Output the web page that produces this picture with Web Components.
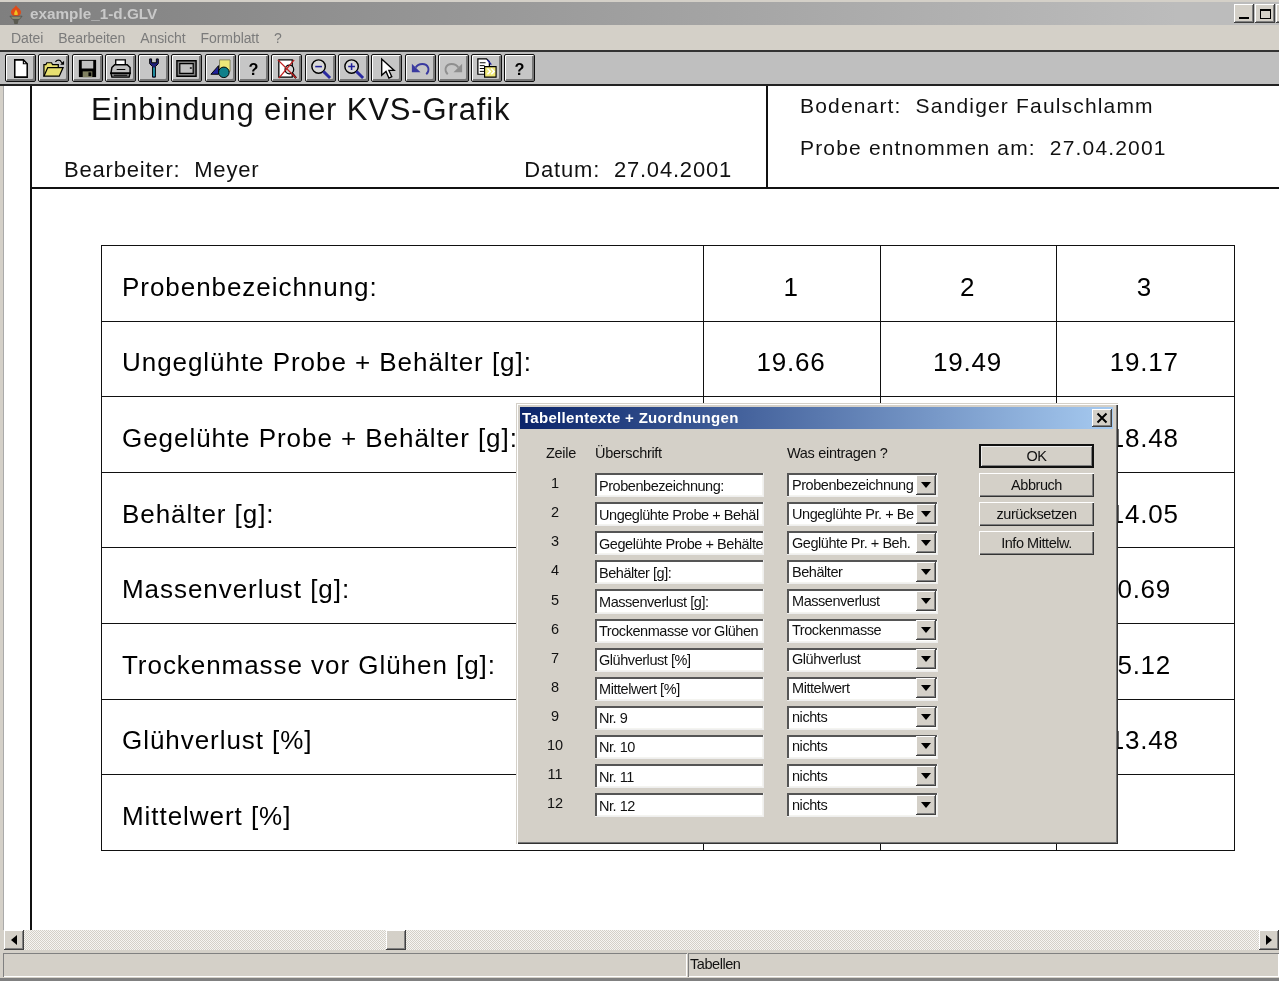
<!DOCTYPE html>
<html lang="de"><head><meta charset="utf-8"><title>example_1-d.GLV</title>
<style>
html,body{margin:0;padding:0;height:981px;overflow:hidden;background:#d4d0c8}
body{font-family:"Liberation Sans",Arial,sans-serif}
</style></head><body>
<x-app>
  <x-titlebar slot="top" caption="example_1-d.GLV"></x-titlebar>
  <x-menubar slot="top"><span>Datei</span><span>Bearbeiten</span><span>Ansicht</span><span>Formblatt</span><span>?</span></x-menubar>
  <x-toolbar slot="top">
    <x-tool><svg viewBox="0 0 24 24"><path d="M6 3h9l4 4v14H6z" fill="#fff" stroke="#000" stroke-width="1.6"/><path d="M15 3v4h4" fill="none" stroke="#000" stroke-width="1.2"/></svg></x-tool>
    <x-tool><svg viewBox="0 0 24 24"><path d="M2 20V8h2l1-2h5l1 2h6v3" fill="#e8e070" stroke="#000" stroke-width="1.3"/><path d="M2 20l4-9h16l-4 9z" fill="#e8e070" stroke="#000" stroke-width="1.3"/><path d="M14 5c2-2.500 5-2 6 0l1.500 2" fill="none" stroke="#000" stroke-width="1.300"/><path d="M23 4v4h-4z" fill="#000"/></svg></x-tool>
    <x-tool><svg viewBox="0 0 24 24"><path d="M3 3h18v18H3z" fill="#000"/><path d="M6 4h12v8H6z" fill="#c0c0c0"/><path d="M7 15h10v6H7z" fill="#808060"/><path d="M13 16h3v4h-3z" fill="#000"/></svg></x-tool>
    <x-tool><svg viewBox="0 0 24 24"><path d="M7 3h10v7H7z" fill="#fff" stroke="#000" stroke-width="1.400"/><path d="M3 11l3-3h13l3 3v6H2z" fill="#c0c0c0" stroke="#000" stroke-width="1.500"/><path d="M2 17h20l-1 4H3z" fill="#808080" stroke="#000" stroke-width="1.400"/><path d="M8 13h9M5 19h14" stroke="#000" stroke-width="1.200"/></svg></x-tool>
    <x-tool><svg viewBox="0 0 24 24"><path d="M8 2v5l3 3v11h3V10l3-3V2h-2v4h-5V2z" fill="#20207a" stroke="#000" stroke-width="1"/><path d="M11.500 11h2v9h-2z" fill="#1f8f9f"/></svg></x-tool>
    <x-tool><svg viewBox="0 0 24 24"><path d="M2 4h20v16H2z" fill="#808080" stroke="#000" stroke-width="1.500"/><path d="M5 7h14v10H5z" fill="#c0c0c0" stroke="#000" stroke-width="1.300"/><path d="M15.500 11.500h2" stroke="#000" stroke-width="1.500"/></svg></x-tool>
    <x-tool><svg viewBox="0 0 24 24"><path d="M11 3h11v12H11z" fill="#f0e878" stroke="#808060"/><path d="M2 18l8-9v9z" fill="#20209a" stroke="#000"/><circle cx="15.500" cy="16" r="5.500" fill="#10808a" stroke="#000"/></svg></x-tool>
    <x-tool><svg viewBox="0 0 24 24"><text x="12" y="18.500" text-anchor="middle" font-family="Liberation Sans" font-weight="700" font-size="17">?</text></svg></x-tool>
    <x-tool><svg viewBox="0 0 24 24"><path d="M4 3h14v18H4z" fill="#fff" stroke="#000" stroke-width="1.300"/><circle cx="15" cy="13" r="4.500" fill="#d8d8d8" stroke="#000" stroke-width="1.300"/><path d="M18 17l4 5" stroke="#000" stroke-width="2.200"/><path d="M3 3l19 19M20 3L4 22" stroke="#c02020" stroke-width="1.400"/></svg></x-tool>
    <x-tool><svg viewBox="0 0 24 24"><circle cx="10" cy="10" r="7" fill="#d8d8d8" stroke="#000" stroke-width="1.500"/><path d="M6.500 10h7" stroke="#20209a" stroke-width="1.600"/><path d="M15 15l7 7" stroke="#2a2aa0" stroke-width="3"/></svg></x-tool>
    <x-tool><svg viewBox="0 0 24 24"><circle cx="10" cy="10" r="7" fill="#d8d8d8" stroke="#000" stroke-width="1.500"/><path d="M6.500 10h7M10 6.500v7" stroke="#20209a" stroke-width="1.600"/><path d="M15 15l7 7" stroke="#2a2aa0" stroke-width="3"/></svg></x-tool>
    <x-tool><svg viewBox="0 0 24 24"><path d="M7 2v17l4.500-4 3 7 3-1.500-3-6.500H20z" fill="#fff" stroke="#000" stroke-width="1.400"/></svg></x-tool>
    <x-tool><svg viewBox="0 0 24 24"><path d="M7 11c3-5 11-5 13 0 1 3 0 5-2 7" fill="none" stroke="#3a3aa0" stroke-width="2"/><path d="M3 7v9h9z" fill="#3a3aa0"/></svg></x-tool>
    <x-tool><svg viewBox="0 0 24 24"><path d="M17 11c-3-5-11-5-13 0-1 3 0 5 2 7" fill="none" stroke="#8f8f8f" stroke-width="2"/><path d="M21 7v9h-9z" fill="#8f8f8f"/></svg></x-tool>
    <x-tool><svg viewBox="0 0 24 24"><path d="M3 2h9l3 3v13H3z" fill="#fff" stroke="#000" stroke-width="1.300"/><path d="M5 6h6M5 9h5M5 12h5M5 15h5" stroke="#000" stroke-width="1"/><path d="M10 10h12v11H10z" fill="#f0e878" stroke="#000" stroke-width="1.200"/><path d="M13 12l3 3-3 3M17 12l3 3-3 3" fill="none" stroke="#fff" stroke-width="1.500"/><path d="M13 3l4 5" stroke="#20209a" stroke-width="1.500"/></svg></x-tool>
    <x-tool><svg viewBox="0 0 24 24"><text x="12" y="18.500" text-anchor="middle" font-family="Liberation Sans" font-weight="700" font-size="17">?</text></svg></x-tool>
  </x-toolbar>

  <x-sheet>
    <x-sheet-head slot="head">
      <span slot="title">Einbindung einer KVS-Grafik</span>
      <span slot="editor">Bearbeiter:&nbsp; Meyer</span>
      <span slot="date">Datum:&nbsp; 27.04.2001</span>
      <span slot="soil">Bodenart:&nbsp; Sandiger Faulschlamm</span>
      <span slot="sample">Probe entnommen am:&nbsp; 27.04.2001</span>
    </x-sheet-head>
    <x-data-table>
      <x-cell label>Probenbezeichnung:</x-cell><x-cell>1</x-cell><x-cell>2</x-cell><x-cell>3</x-cell>
      <x-cell label>Ungeglühte Probe + Behälter [g]:</x-cell><x-cell>19.66</x-cell><x-cell>19.49</x-cell><x-cell>19.17</x-cell>
      <x-cell label>Gegelühte Probe + Behälter [g]:</x-cell><x-cell></x-cell><x-cell></x-cell><x-cell>18.48</x-cell>
      <x-cell label>Behälter [g]:</x-cell><x-cell></x-cell><x-cell></x-cell><x-cell>14.05</x-cell>
      <x-cell label>Massenverlust [g]:</x-cell><x-cell></x-cell><x-cell></x-cell><x-cell>0.69</x-cell>
      <x-cell label>Trockenmasse vor Glühen [g]:</x-cell><x-cell></x-cell><x-cell></x-cell><x-cell>5.12</x-cell>
      <x-cell label>Glühverlust [%]</x-cell><x-cell></x-cell><x-cell></x-cell><x-cell>13.48</x-cell>
      <x-cell label>Mittelwert [%]</x-cell><x-cell></x-cell><x-cell></x-cell><x-cell></x-cell>
    </x-data-table>
  </x-sheet>

  <x-dialog slot="overlay" caption="Tabellentexte + Zuordnungen">
    <x-form-grid>
      <x-lbl head>Zeile</x-lbl><x-lbl head>Überschrift</x-lbl><x-lbl head>Was eintragen ?</x-lbl>
      <x-lbl num>1</x-lbl><x-field>Probenbezeichnung:</x-field><x-combo>Probenbezeichnung</x-combo>
      <x-lbl num>2</x-lbl><x-field>Ungeglühte Probe + Behäl</x-field><x-combo>Ungeglühte Pr. + Be</x-combo>
      <x-lbl num>3</x-lbl><x-field>Gegelühte Probe + Behälte</x-field><x-combo>Geglühte Pr. + Beh.</x-combo>
      <x-lbl num>4</x-lbl><x-field>Behälter [g]:</x-field><x-combo>Behälter</x-combo>
      <x-lbl num>5</x-lbl><x-field>Massenverlust [g]:</x-field><x-combo>Massenverlust</x-combo>
      <x-lbl num>6</x-lbl><x-field>Trockenmasse vor Glühen</x-field><x-combo>Trockenmasse</x-combo>
      <x-lbl num>7</x-lbl><x-field>Glühverlust [%]</x-field><x-combo>Glühverlust</x-combo>
      <x-lbl num>8</x-lbl><x-field>Mittelwert [%]</x-field><x-combo>Mittelwert</x-combo>
      <x-lbl num>9</x-lbl><x-field>Nr. 9</x-field><x-combo>nichts</x-combo>
      <x-lbl num>10</x-lbl><x-field>Nr. 10</x-field><x-combo>nichts</x-combo>
      <x-lbl num>11</x-lbl><x-field>Nr. 11</x-field><x-combo>nichts</x-combo>
      <x-lbl num>12</x-lbl><x-field>Nr. 12</x-field><x-combo>nichts</x-combo>
    </x-form-grid>
    <x-btn-col slot="side">
      <x-btn default>OK</x-btn><x-btn>Abbruch</x-btn><x-btn>zurücksetzen</x-btn><x-btn>Info Mittelw.</x-btn>
    </x-btn-col>
  </x-dialog>

  <x-hscroll slot="bottom"></x-hscroll>
  <x-status slot="bottom">Tabellen</x-status>
</x-app>

<script>
const FACE='#d4d0c8';
function def(name,css,html,init){
  customElements.define(name,class extends HTMLElement{
    constructor(){super();const r=this.attachShadow({mode:'open'});
      r.innerHTML='<style>'+css+'</style>'+html;}
    connectedCallback(){init&&init.call(this,this.shadowRoot);}
  });
}
const arrowBtn=`display:flex;align-items:center;justify-content:center;background:${FACE};box-shadow:inset -1px -1px 0 #404040,inset 1px 1px 0 #fff,inset -2px -2px 0 #808080;box-sizing:border-box;`;

def('x-app',`:host{display:flex;flex-direction:column;position:relative;width:1279px;height:981px;overflow:hidden;background:${FACE};filter:blur(.35px)}
  main{flex:1;min-height:0;display:flex}`,
  `<slot name="top"></slot><main><slot></slot></main><slot name="bottom"></slot><slot name="overlay"></slot>`);

def('x-titlebar',`:host{display:flex;align-items:center;height:23px;margin-top:2px;background:linear-gradient(90deg,#7f7f7f,#bcbcbc 92%);color:#c9c9c9;font:700 15.300px "Liberation Sans",sans-serif;padding:0 0 0 7px;box-sizing:border-box;overflow:hidden;flex:none}
  svg{width:18px;height:22px;flex:none;margin-right:5px}
  .c{flex:1;white-space:nowrap}
  .b{flex:none;width:20px;height:19px;${arrowBtn}margin-left:0}
  .b+.b{margin-left:1px}.x{margin:0 -17px 0 3px}
  .m i{display:block;width:10px;height:2px;background:#000;margin-top:9px}
  .r i{display:block;width:11px;height:10px;border:1.500px solid #000;border-top-width:2px;box-sizing:border-box}`,
  `<svg viewBox="0 0 16 20"><path d="M8 2c2 3 5 4 4.500 7-.5 2-2 3-4.500 3s-4-1-4.500-3C3 6 6 5 8 2z" fill="#e04a18"/><path d="M8 6c1 2 2 3 1.500 5H6.500C6 9 7 8 8 6z" fill="#f0c020"/><path d="M2.500 12h11l-2.500 3H5z" fill="#8a8a70" stroke="#444" stroke-width=".6"/><path d="M5.500 15h5l-1 4h-3z" fill="#5a5a50"/></svg>
   <span class="c"></span><span class="b m"><i></i></span><span class="b r"><i></i></span><span class="b x"></span>`,
  function(r){r.querySelector('.c').textContent=this.getAttribute('caption');});

def('x-menubar',`:host{display:flex;align-items:center;gap:15px;height:25px;padding:0 0 0 11px;color:#7b7b7b;font:14px "Liberation Sans",sans-serif;flex:none;box-sizing:border-box;letter-spacing:-.08px}`,`<slot></slot>`);

def('x-toolbar',`:host{display:flex;align-items:center;gap:2.300px;height:36px;padding:0 0 0 5px;background:#bfbfbf;border-top:2px solid #333;border-bottom:2px solid #222;box-sizing:border-box;flex:none}`,`<slot></slot>`);

def('x-tool',`:host{display:flex;align-items:center;justify-content:center;width:31px;height:28px;box-sizing:border-box;background:#c6c6c6;border:1.500px solid #111;border-radius:2px;box-shadow:inset 1px 1px 0 #fff,inset -2px -2px 0 #777}
  ::slotted(svg){width:23px;height:23px}`,`<slot></slot>`);

def('x-sheet',`:host{display:flex;flex-direction:column;flex:1;min-width:0;background:#fff;margin-left:0;border-left:3px solid ${FACE};box-shadow:inset 1px 0 0 #aaa}
  .p{flex:1;margin-left:27px;border-left:2px solid #111}`,
  `<div class="p"><slot name="head"></slot><slot></slot></div>`);

def('x-sheet-head',`:host{display:flex;height:103px;border-bottom:2px solid #111;box-sizing:border-box;color:#111;font:22px "Liberation Sans",sans-serif;letter-spacing:.8px;white-space:nowrap}
  .l{width:736px;box-sizing:border-box;border-right:2px solid #111;padding:0 34px 0 32px;display:flex;flex-direction:column}
  .t{padding:6px 0 0 27px;font-size:31px;line-height:36px;letter-spacing:.85px;height:65px}
  .s{display:flex;justify-content:space-between;line-height:26px}
  .rr{padding:7px 0 0 32px;display:flex;flex-direction:column;gap:16px;line-height:26px;font-size:21px;letter-spacing:1.170px}`,
  `<div class="l"><div class="t"><slot name="title"></slot></div><div class="s"><slot name="editor"></slot><slot name="date"></slot></div></div>
   <div class="rr"><slot name="soil"></slot><slot name="sample"></slot></div>`);

def('x-data-table',`:host{display:grid;grid-template-columns:602px 177px 176px 177.500px;grid-auto-rows:75.600px;margin:56px 0 0 69px;width:1132.500px;border-top:1.500px solid #111;border-left:1.500px solid #111;box-sizing:content-box}`,`<slot></slot>`);

def('x-cell',`:host{display:flex;align-items:center;justify-content:center;border-right:1.500px solid #111;border-bottom:1.500px solid #111;box-sizing:border-box;color:#000;font:26px "Liberation Sans",sans-serif;letter-spacing:.75px;white-space:nowrap;overflow:hidden;padding:8px 2px 0 0}
  :host([label]){justify-content:flex-start;padding:8px 0 0 20px;letter-spacing:.95px}`,`<slot></slot>`);

def('x-dialog',`:host{position:absolute;left:516px;top:403px;width:602px;height:441px;box-sizing:border-box;background:${FACE};padding:4px 5px 0 4px;box-shadow:inset 1px 1px 0 ${FACE},inset 2px 2px 0 #fff,inset -1px -1px 0 #333,inset -2px -2px 0 #777;display:block}
  header{height:22px;box-sizing:border-box;display:flex;align-items:center;background:linear-gradient(90deg,#0a246a,#a6caf0);color:#fff;font:700 15px "Liberation Sans",sans-serif;letter-spacing:.3px;padding:0 0 1px 2px}
  header span{flex:1}
  header b{width:20px;height:18px;margin-right:1px;${arrowBtn}}
  header svg{width:12px;height:12px}
  .b{display:flex;padding:15px 0 0 26px;gap:41px}`,
  `<header><span></span><b><svg viewBox="0 0 12 12"><path d="M1.500 1.500l9 9M10.500 1.500l-9 9" stroke="#000" stroke-width="2"/></svg></b></header>
   <div class="b"><slot></slot><slot name="side"></slot></div>`,
  function(r){r.querySelector('header span').textContent=this.getAttribute('caption');});

def('x-form-grid',`:host{display:grid;grid-template-columns:49px 192px 151px;grid-auto-rows:24.100px;row-gap:5px}`,`<slot></slot>`);
const T14=`font:14.500px "Liberation Sans",sans-serif;letter-spacing:-.45px;color:#111;white-space:nowrap;`;
def('x-lbl',`:host{display:flex;align-items:center;${T14}box-sizing:border-box}
  :host([head]){padding-bottom:6px;letter-spacing:-.3px}
  :host([num]){padding:0 0 4px 0;width:18px;justify-content:center;letter-spacing:0}`,`<slot></slot>`);

const sunken=`box-sizing:border-box;background:#fff;box-shadow:inset 2px 2px 0 #555,inset -1px -1px 0 #f4f4f0,0 0 0 1px ${FACE};border-right:1px solid #eee;border-bottom:1px solid #eee;`;
def('x-field',`:host{display:flex;align-items:center;width:169px;${sunken}${T14}padding:2px 0 0 4px;overflow:hidden}`,`<slot></slot>`);
def('x-combo',`:host{display:flex;align-items:center;width:151px;${sunken}${T14}padding:0 1px 0 5px;overflow:hidden}
  span{display:block;flex:1;overflow:hidden;min-width:0}
  b{width:20px;height:20px;flex:none;${arrowBtn}margin-left:1px}
  b i{border:5px solid transparent;border-top:6px solid #000;border-bottom:0}`,`<span><slot></slot></span><b><i></i></b>`);

def('x-btn-col',`:host{display:flex;flex-direction:column;gap:5px;width:115px}`,`<slot></slot>`);
def('x-btn',`:host{display:flex;align-items:center;justify-content:center;height:24.100px;${T14}background:${FACE};box-shadow:inset 1px 1px 0 #fff,inset -1px -1px 0 #333,inset -2px -2px 0 #808080;box-sizing:border-box}
  :host([default]){outline:2px solid #111;outline-offset:-2px;box-shadow:inset 3px 3px 0 #eee,inset -3px -3px 0 #808080}`,`<slot></slot>`);

def('x-hscroll',`:host{display:flex;height:20px;flex:none;background:#fff;margin-left:4px;background-image:conic-gradient(#f6f5f2 25%,${FACE} 0 50%,#f6f5f2 0 75%,${FACE} 0);background-size:2px 2px}
  .a{width:20px;height:20px;${arrowBtn}flex:none}
  .a i{border:5px solid transparent;border-left:0;border-right:6px solid #000}
  .a.n i{border-right:0;border-left:6px solid #000}
  .s{flex:none;width:362px}.t{width:20px;height:20px;${arrowBtn}flex:none}.g{flex:1}`,
  `<span class="a"><i></i></span><span class="s"></span><span class="t"></span><span class="g"></span><span class="a n"><i></i></span>`);

def('x-status',`:host{display:flex;height:31px;flex:none;box-sizing:border-box;background:${FACE};border-bottom:3px solid #808080;padding:3px 0 0 3px;${T14}}
  .p{height:24px;box-sizing:border-box;box-shadow:inset 1px 1px 0 #808080,inset -1px -1px 0 #fff}
  .p1{width:684px}.p2{flex:1;padding:3px 0 0 2px;margin-left:1px}`,
  `<div class="p p1"></div><div class="p p2"><slot></slot></div>`);
</script>
</body></html>
